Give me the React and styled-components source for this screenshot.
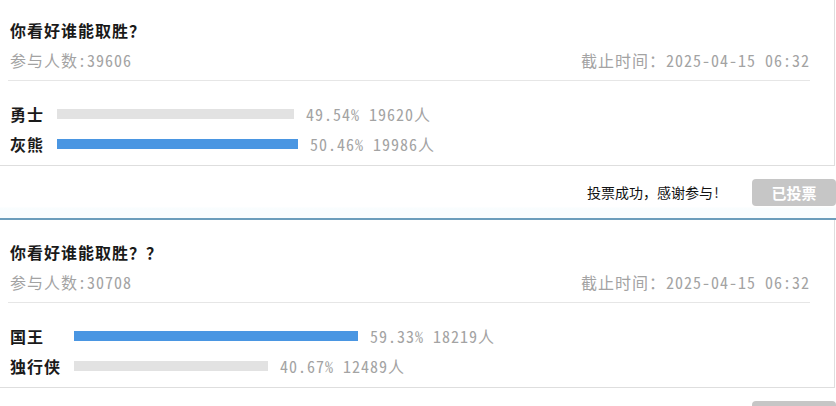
import React from 'react'
import styled, { createGlobalStyle } from 'styled-components'

const GlobalStyle = createGlobalStyle`
  body {
    margin: 0;
    background: #fff;
    font-family: "Noto Sans Mono CJK SC", "Noto Sans CJK SC", "Liberation Mono", monospace;
    overflow: hidden;
  }
`;

const polls = [
  {
    title: '你看好谁能取胜？',
    total: 39606,
    deadline: '2025-04-15 06:32',
    message: '投票成功，感谢参与!',
    options: [
      { name: '勇士', pct: 49.54, count: 19620 },
      { name: '灰熊', pct: 50.46, count: 19986 },
    ],
  },
  {
    title: '你看好谁能取胜？？',
    total: 30708,
    deadline: '2025-04-15 06:32',
    message: null,
    options: [
      { name: '国王', pct: 59.33, count: 18219 },
      { name: '独行侠', pct: 40.67, count: 12489 },
    ],
  },
];

const TRACK = 478;

const List = styled.div`
  margin-top: -2px;
`;

const Block = styled.section`
  border-bottom: 2px solid #6b9dbb;
`;

const Card = styled.div`
  width: 835px;
  box-sizing: border-box;
  border-right: 1px solid #dedede;
  border-bottom: 1px solid #dedede;
  padding: 20px 24px 6px 8px;
`;

const Header = styled.div`
  padding: 0 0 8px 2px;
  border-bottom: 1px solid #e6e6e6;
  letter-spacing: 1px;
`;

const Title = styled.h3`
  margin: 0 0 6px;
  font-size: 16px;
  line-height: 24px;
  font-weight: bold;
  color: #1a1a1a;
`;

const Meta = styled.div`
  display: flex;
  justify-content: space-between;
  font-size: 16px;
  line-height: 24px;
  color: #a3a3a3;
`;

const Options = styled.div`
  display: grid;
  grid-template-columns: max-content 1fr;
  grid-auto-rows: 30px;
  align-items: center;
  column-gap: 13px;
  padding: 18px 0 0 2px;
  letter-spacing: 1px;
`;

const Label = styled.span`
  font-size: 16px;
  font-weight: bold;
  color: #1a1a1a;
`;

const Track = styled.div`
  display: flex;
  align-items: center;
  gap: 12px;
`;

const Bar = styled.div`
  height: 10px;
  flex: none;
  background: ${p => (p.$lead ? '#4a96e2' : '#e2e2e2')};
`;

const Result = styled.span`
  font-size: 16px;
  color: #a3a3a3;
  white-space: pre;
`;

const Footer = styled.div`
  height: 52px;
  display: flex;
  align-items: center;
  justify-content: flex-end;
  gap: 32px;
  background: linear-gradient(to bottom, #fff 78%, #f9fdfe 82%);
`;

const Message = styled.span`
  font-size: 14px;
  color: #111;
`;

const Voted = styled.button`
  width: 84px;
  height: 27px;
  border: 0;
  border-radius: 4px;
  background: #c6c6c6;
  color: #fff;
  font-family: inherit;
  font-size: 15px;
  font-weight: bold;
  padding: 0;
  cursor: default;
`;

function Poll({ poll }) {
  const max = Math.max(...poll.options.map(o => o.pct));
  return (
    <Block>
      <Card>
        <Header>
          <Title>{poll.title}</Title>
          <Meta>
            <span>参与人数:{poll.total}</span>
            <span>截止时间：{poll.deadline}</span>
          </Meta>
        </Header>
        <Options>
          {poll.options.map(o => (
            <React.Fragment key={o.name}>
              <Label>{o.name}</Label>
              <Track>
                <Bar $lead={o.pct === max} style={{ width: Math.round((o.pct / 100) * TRACK) }} />
                <Result>{o.pct.toFixed(2)}% {o.count}人</Result>
              </Track>
            </React.Fragment>
          ))}
        </Options>
      </Card>
      <Footer>
        {poll.message && <Message>{poll.message}</Message>}
        <Voted disabled>已投票</Voted>
      </Footer>
    </Block>
  );
}

export default function App() {
  return (
    <>
      <GlobalStyle />
      <List>
        {polls.map(p => (
          <Poll key={p.title} poll={p} />
        ))}
      </List>
    </>
  );
}
